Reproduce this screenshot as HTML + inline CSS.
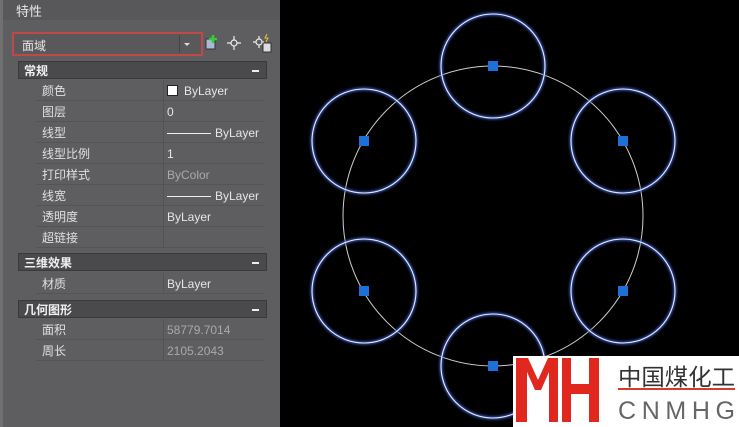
<!DOCTYPE html>
<html><head><meta charset="utf-8"><style>
body{margin:0;width:739px;height:427px;overflow:hidden;background:#000;font-family:"Liberation Sans","Noto Sans CJK SC",sans-serif;position:relative}
#p{position:absolute;left:0;top:0;width:280px;height:427px;background:#5e5d60}
.t{position:absolute;font-size:12px;color:#e6e6e6;white-space:nowrap}
.h{position:absolute;left:18px;width:249px;height:18px;background:#4a494c;border:1px solid #3a393c;box-sizing:border-box}
.h span{position:absolute;left:5px;top:0px;font-size:12px;font-weight:bold;color:#f0f0f0}
.h i{position:absolute;right:7px;top:8px;width:7px;height:2px;background:#eee}
.r{position:absolute;left:36px;width:229px;height:21px;border-bottom:1px solid #545356;box-sizing:border-box}
.r b{position:absolute;left:127px;top:0;height:21px;border-left:1px solid #535255}
.r .l{position:absolute;left:6px;top:2px;font-size:12px;color:#e0e0e0}
.r .v{position:absolute;left:131px;top:4px;font-size:12px;color:#e6e6e6;white-space:nowrap}
.g{color:#a9a9a9!important}
.ln{display:inline-block;width:44px;height:1px;background:#eee;vertical-align:middle;margin-right:4px}
</style></head><body>
<div id="p">
<div style="position:absolute;left:0;top:0;width:3px;height:427px;background:#707070"></div>
<div style="position:absolute;left:3px;top:0;width:277px;height:20px;background:#58575a"></div>
<div class="t" style="left:16px;top:1px;font-size:13px">特性</div>
<div style="position:absolute;left:12px;top:32px;width:191px;height:24px;border:2px solid #c04848;box-sizing:border-box;background:#59585b"></div>
<div style="position:absolute;left:179px;top:35px;width:1px;height:18px;background:#444"></div>
<div class="t" style="left:22px;top:37px">面域</div>
<div style="position:absolute;left:184px;top:43px;border:3px solid transparent;border-top:3px solid #ddd"></div>
<svg style="position:absolute;left:203px;top:33px" width="75" height="20">
<rect x="3" y="6" width="9" height="10" fill="#a8b8d8" stroke="#333"/>
<path d="M10 2v8M6 6h8" stroke="#3c3" stroke-width="2.5"/>
<g stroke="#eee" stroke-width="1.2" fill="none"><circle cx="31" cy="10" r="3"/><path d="M31 3v4M31 13v4M24 10h4M34 10h4"/>
<circle cx="56" cy="9" r="3"/><path d="M56 3v3M56 12v3M50 9h3M59 9h2"/></g>
<rect x="60" y="10" width="8" height="9" fill="#ddd" stroke="#333"/>
<path d="M64 1l-2 4h3l-2 4" stroke="#e8c040" fill="none"/>
</svg>
<div class="h" style="top:61px"><span>常规</span><i></i></div>
<div class="r" style="top:80px"><span class="l">颜色</span><b></b><span class="v"><span style="display:inline-block;width:9px;height:9px;background:#fff;border:1px solid #222;margin-right:6px;vertical-align:-1px"></span>ByLayer</span></div>
<div class="r" style="top:101px"><span class="l">图层</span><b></b><span class="v">0</span></div>
<div class="r" style="top:122px"><span class="l">线型</span><b></b><span class="v"><span class="ln"></span>ByLayer</span></div>
<div class="r" style="top:143px"><span class="l">线型比例</span><b></b><span class="v">1</span></div>
<div class="r" style="top:164px"><span class="l">打印样式</span><b></b><span class="v g">ByColor</span></div>
<div class="r" style="top:185px"><span class="l">线宽</span><b></b><span class="v"><span class="ln"></span>ByLayer</span></div>
<div class="r" style="top:206px"><span class="l">透明度</span><b></b><span class="v">ByLayer</span></div>
<div class="r" style="top:227px"><span class="l">超链接</span><b></b></div>
<div class="h" style="top:253px"><span>三维效果</span><i></i></div>
<div class="r" style="top:273px"><span class="l">材质</span><b></b><span class="v">ByLayer</span></div>
<div class="h" style="top:300px"><span>几何图形</span><i></i></div>
<div class="r" style="top:319px"><span class="l">面积</span><b></b><span class="v g">58779.7014</span></div>
<div class="r" style="top:340px"><span class="l">周长</span><b></b><span class="v g">2105.2043</span></div>
</div>
<svg style="position:absolute;left:0;top:0" width="739" height="427">
<defs><filter id="gl"><feGaussianBlur stdDeviation="1.2"/></filter></defs>
<circle cx="493" cy="216" r="150" fill="none" stroke="#cfcfcf" stroke-width="1"/>
<g fill="none" stroke="#3a5ac0" stroke-width="3" filter="url(#gl)">
<circle cx="493" cy="66" r="52"/><circle cx="623" cy="141" r="52"/><circle cx="623" cy="291" r="52"/><circle cx="493" cy="366" r="52"/><circle cx="364" cy="291" r="52"/><circle cx="364" cy="141" r="52"/></g>
<g fill="none" stroke="#e8eeff" stroke-width="1.1">
<circle cx="493" cy="66" r="52"/><circle cx="623" cy="141" r="52"/><circle cx="623" cy="291" r="52"/><circle cx="493" cy="366" r="52"/><circle cx="364" cy="291" r="52"/><circle cx="364" cy="141" r="52"/></g>
<g fill="#1e6fd8"><rect x="488" y="61" width="10" height="10"/><rect x="618" y="136" width="10" height="10"/><rect x="618" y="286" width="10" height="10"/><rect x="488" y="361" width="10" height="10"/><rect x="359" y="286" width="10" height="10"/><rect x="359" y="136" width="10" height="10"/></g>
<rect x="513" y="356" width="226" height="71" fill="#fff"/>
<path d="M516 358h12l10 22 10-22h10v64h-9v-50l-8 18h-6l-8-18v50h-11z M562 358h9v26h18v-26h10v64h-10v-28h-18v28h-9z" fill="#e0281e"/>
<text x="618" y="385" font-size="23" fill="#333" textLength="117" lengthAdjust="spacingAndGlyphs" font-family="Noto Sans CJK SC,sans-serif">中国煤化工</text>
<rect x="618" y="388" width="117" height="2" fill="#d43a2e"/>
<text x="618" y="419" font-size="25" fill="#666" textLength="117" lengthAdjust="spacing" font-family="Liberation Sans,sans-serif">CNMHG</text>
</svg>
</body></html>
